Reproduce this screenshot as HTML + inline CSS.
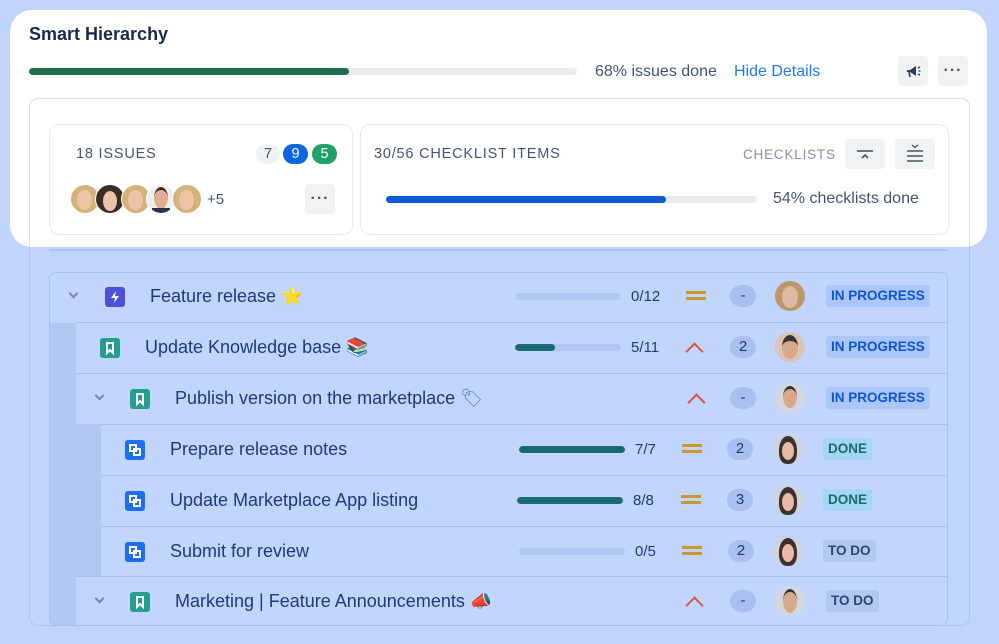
<!DOCTYPE html>
<html><head><meta charset="utf-8"><style>
*{box-sizing:border-box;margin:0;padding:0}
body{width:999px;height:644px;background:#c0d4fd;font-family:"Liberation Sans",sans-serif;position:relative;overflow:hidden}
.a{position:absolute}
.t{color:#1e3a78;font-size:18px;white-space:nowrap}
.row{position:absolute;left:0;right:0;height:51px;border-top:1px solid #a9c0ee;background:#c2d5fd}
.bar{position:absolute;height:7px;border-radius:4px;background:#b0c6f3;overflow:hidden}
.bar i{position:absolute;left:0;top:0;bottom:0;background:#1b6a72;border-radius:4px}
.cnt{position:absolute;font-size:15px;color:#1e3a78}
.pill{position:absolute;width:26px;height:22px;border-radius:11px;background:#a8bff0;color:#1e3a78;font-size:15px;text-align:center;line-height:22px}
.loz{position:absolute;height:22px;padding:0 5px;border-radius:3px;font-weight:bold;font-size:13.5px;line-height:22px}
.ip{background:#acc6f9;color:#0b55cf}
.dn{background:#a4d6f5;color:#1c6b6e}
.td{background:#b3c8f1;color:#2c4373}
.ico{position:absolute;width:20px;height:20px;border-radius:3px}
.av{position:absolute;width:30px;height:30px;border-radius:50%;overflow:hidden}
.chev{position:absolute;width:7px;height:7px;border-right:2px solid #7487b6;border-bottom:2px solid #7487b6;transform:rotate(45deg)}
.eq{position:absolute;width:20px;height:9px;border-top:3px solid #c89a2e;border-bottom:3px solid #c89a2e}
.up{position:absolute;width:13px;height:13px;border-left:2.5px solid #d9534f;border-top:2.5px solid #d9534f;transform:rotate(45deg)}
.btn{position:absolute;background:#f1f2f4;border-radius:4px}
.dots{position:absolute;left:50%;top:50%;transform:translate(-50%,-50%);font-size:16px;color:#44546f;font-weight:bold;letter-spacing:1px;line-height:1}
</style></head><body>

<div class="a" style="left:29px;top:98px;width:941px;height:528px;border:1.5px solid #aec4ef;border-radius:9px"></div>
<div class="a" style="left:49px;top:249px;width:899px;height:2px;background:#aec4ef"></div>

<div class="a" style="left:49px;top:272px;width:899px;height:354px;border:1.5px solid #a9c0ee;border-radius:7px;overflow:hidden;background:#b2c8f3">
  <div class="row" style="top:-1px;border-top:none">
    <div class="chev" style="left:20px;top:18px"></div>
    <div class="ico" style="left:55px;top:15px;background:#4c50d8"><svg width="20" height="20" viewBox="0 0 20 20"><path d="M11 4 6 11h4l-1 5 5-7h-4z" fill="#fff"/></svg></div>
    <div class="t a" style="left:100px;top:14px">Feature release <span style="color:#e0b53a">⭐</span></div>
    <div class="bar" style="left:465px;top:21px;width:106px"></div>
    <div class="cnt" style="left:581px;top:16px">0/12</div>
    <div class="eq" style="left:636px;top:19px"></div>
    <div class="pill" style="left:680px;top:13px">-</div>
    <div class="av" style="left:725px;top:9px;background:#b89a6a"><div class="a" style="left:7px;top:5px;width:16px;height:22px;border-radius:50%;background:#e0b7a0"></div></div>
    <div class="loz ip" style="left:776px;top:13px">IN PROGRESS</div>
  </div>
  <div class="row" style="top:49px;left:26px">
    <div class="ico" style="left:24px;top:15px;background:#269e8e"><svg width="20" height="20"><path d="M7 5h6v10l-3-3-3 3z" fill="none" stroke="#fff" stroke-width="2"/></svg></div>
    <div class="t a" style="left:69px;top:14px">Update Knowledge base 📚</div>
    <div class="bar" style="left:439px;top:21px;width:106px"><i style="width:40px"></i></div>
    <div class="cnt" style="left:555px;top:16px">5/11</div>
    <div class="up" style="left:612px;top:22px"></div>
    <div class="pill" style="left:654px;top:13px">2</div>
    <div class="av" style="left:699px;top:9px;background:#d7c6b8"><div class="a" style="left:7px;top:3px;width:16px;height:24px;border-radius:50%;background:#d9a78a;border-top:6px solid #3a3530"></div></div>
    <div class="loz ip" style="left:750px;top:13px">IN PROGRESS</div>
  </div>
  <div class="row" style="top:100px;left:26px">
    <div class="chev" style="left:20px;top:18px"></div>
    <div class="ico" style="left:54px;top:15px;background:#269e8e"><svg width="20" height="20"><path d="M7 5h6v10l-3-3-3 3z" fill="none" stroke="#fff" stroke-width="2"/></svg></div>
    <div class="t a" style="left:99px;top:14px">Publish version on the marketplace <span style="opacity:.6">🏷</span></div>
    <div class="up" style="left:614px;top:22px"></div>
    <div class="pill" style="left:654px;top:13px">-</div>
    <div class="av" style="left:699px;top:9px;background:#d3d6dc"><div class="a" style="left:8px;top:3px;width:14px;height:22px;border-radius:50%;background:#d7a88e;border-top:3px solid #333"></div></div>
    <div class="loz ip" style="left:750px;top:13px">IN PROGRESS</div>
  </div>
  <div class="row" style="top:151px;left:51px">
    <div class="ico" style="left:24px;top:15px;background:#1d6ff0"><svg width="20" height="20"><rect x="5" y="5" width="6" height="6" fill="none" stroke="#fff" stroke-width="2"/><rect x="9" y="9" width="6" height="6" fill="none" stroke="#fff" stroke-width="2"/></svg></div>
    <div class="t a" style="left:69px;top:14px">Prepare release notes</div>
    <div class="bar" style="left:418px;top:21px;width:106px"><i style="width:106px"></i></div>
    <div class="cnt" style="left:534px;top:16px">7/7</div>
    <div class="eq" style="left:581px;top:19px"></div>
    <div class="pill" style="left:626px;top:13px">2</div>
    <div class="av" style="left:672px;top:9px;background:#cfd3dc"><div class="a" style="left:6px;top:2px;width:18px;height:28px;border-radius:50% 50% 40% 40%;background:#3b302c"></div><div class="a" style="left:9px;top:8px;width:12px;height:18px;border-radius:50%;background:#e8b9a4"></div></div>
    <div class="loz dn" style="left:722px;top:13px">DONE</div>
  </div>
  <div class="row" style="top:202px;left:51px">
    <div class="ico" style="left:24px;top:15px;background:#1d6ff0"><svg width="20" height="20"><rect x="5" y="5" width="6" height="6" fill="none" stroke="#fff" stroke-width="2"/><rect x="9" y="9" width="6" height="6" fill="none" stroke="#fff" stroke-width="2"/></svg></div>
    <div class="t a" style="left:69px;top:14px">Update Marketplace App listing</div>
    <div class="bar" style="left:416px;top:21px;width:106px"><i style="width:106px"></i></div>
    <div class="cnt" style="left:532px;top:16px">8/8</div>
    <div class="eq" style="left:580px;top:19px"></div>
    <div class="pill" style="left:626px;top:13px">3</div>
    <div class="av" style="left:672px;top:9px;background:#cfd3dc"><div class="a" style="left:6px;top:2px;width:18px;height:28px;border-radius:50% 50% 40% 40%;background:#3b302c"></div><div class="a" style="left:9px;top:8px;width:12px;height:18px;border-radius:50%;background:#e8b9a4"></div></div>
    <div class="loz dn" style="left:722px;top:13px">DONE</div>
  </div>
  <div class="row" style="top:253px;left:51px">
    <div class="ico" style="left:24px;top:15px;background:#1d6ff0"><svg width="20" height="20"><rect x="5" y="5" width="6" height="6" fill="none" stroke="#fff" stroke-width="2"/><rect x="9" y="9" width="6" height="6" fill="none" stroke="#fff" stroke-width="2"/></svg></div>
    <div class="t a" style="left:69px;top:14px">Submit for review</div>
    <div class="bar" style="left:418px;top:21px;width:106px"></div>
    <div class="cnt" style="left:534px;top:16px">0/5</div>
    <div class="eq" style="left:581px;top:19px"></div>
    <div class="pill" style="left:627px;top:13px">2</div>
    <div class="av" style="left:672px;top:9px;background:#cfd3dc"><div class="a" style="left:6px;top:2px;width:18px;height:28px;border-radius:50% 50% 40% 40%;background:#3b302c"></div><div class="a" style="left:9px;top:8px;width:12px;height:18px;border-radius:50%;background:#e8b9a4"></div></div>
    <div class="loz td" style="left:722px;top:13px">TO DO</div>
  </div>
  <div class="row" style="top:303px;left:26px">
    <div class="chev" style="left:20px;top:18px"></div>
    <div class="ico" style="left:54px;top:15px;background:#269e8e"><svg width="20" height="20"><path d="M7 5h6v10l-3-3-3 3z" fill="none" stroke="#fff" stroke-width="2"/></svg></div>
    <div class="t a" style="left:99px;top:14px">Marketing | Feature Announcements <span style="color:#8a6d2f">📣</span></div>
    <div class="up" style="left:612px;top:22px"></div>
    <div class="pill" style="left:654px;top:13px">-</div>
    <div class="av" style="left:699px;top:9px;background:#d3d6dc"><div class="a" style="left:8px;top:3px;width:14px;height:24px;border-radius:50%;background:#d7a88e;border-top:3px solid #333"></div></div>
    <div class="loz td" style="left:750px;top:13px">TO DO</div>
  </div>
</div>

<div class="a" style="left:10px;top:10px;width:977px;height:237px;background:#fff;border-radius:22px;overflow:hidden">
  <div class="a" style="left:19px;top:14px;font-size:18px;font-weight:bold;color:#172b4d">Smart Hierarchy</div>
  <div class="a" style="left:19px;top:58px;width:548px;height:7px;border-radius:4px;background:#ebecf0"><div style="width:320px;height:7px;border-radius:4px;background:#216e4e"></div></div>
  <div class="a" style="left:585px;top:53px;font-size:16px;color:#44546f">68% issues done</div>
  <div class="a" style="left:724px;top:53px;font-size:16px;color:#1d7afc">Hide Details</div>
  <div class="btn" style="left:888px;top:46px;width:30px;height:30px"><svg class="a" style="left:6px;top:6px" width="18" height="18" viewBox="0 0 18 18"><path d="M3 8h3l6-4v10L6 10H3z" fill="#2c3e5d"/><path d="M5 10l1 5" stroke="#2c3e5d" stroke-width="1.6"/><path d="M14 6l2-1M14.5 9h2M14 12l2 1" stroke="#2c3e5d" stroke-width="1.3"/></svg></div>
  <div class="btn" style="left:928px;top:46px;width:30px;height:30px"><span class="dots">···</span></div>
  <div class="a" style="left:19px;top:88px;width:941px;height:200px;border:1.5px solid #dcdfe4;border-radius:9px"></div>
  <div class="a" style="left:39px;top:114px;width:304px;height:111px;border:1.5px solid #e8eaee;border-radius:10px">
    <div class="a" style="left:26px;top:21px;font-size:14.5px;letter-spacing:.8px;color:#44546f">18 ISSUES</div>
    <div class="a" style="left:206px;top:19px;width:24px;height:20px;border-radius:10px;background:#f1f2f4;color:#44546f;font-size:14.5px;text-align:center;line-height:20px">7</div>
    <div class="a" style="left:233px;top:19px;width:25px;height:20px;border-radius:10px;background:#0c66e4;color:#fff;font-size:14.5px;text-align:center;line-height:20px">9</div>
    <div class="a" style="left:262px;top:19px;width:25px;height:20px;border-radius:10px;background:#22a06b;color:#fff;font-size:14.5px;text-align:center;line-height:20px">5</div>
    <div class="av" style="left:20px;top:59px;background:#d2b37a;border:1.5px solid #fff"><div class="a" style="left:6px;top:5px;width:15px;height:20px;border-radius:50%;background:#efc4a6"></div></div>
    <div class="av" style="left:45px;top:59px;background:#3d2c24;border:1.5px solid #fff"><div class="a" style="left:7px;top:6px;width:14px;height:20px;border-radius:50%;background:#ecc3ae"></div></div>
    <div class="av" style="left:71px;top:59px;background:#d2b37a;border:1.5px solid #fff"><div class="a" style="left:6px;top:5px;width:15px;height:20px;border-radius:50%;background:#efc4a6"></div></div>
    <div class="av" style="left:96px;top:59px;background:#eceef1;border:1.5px solid #fff"><div class="a" style="left:7px;top:2px;width:14px;height:22px;border-radius:50%;background:#dfae95;border-top:3px solid #3a2a22"></div><div class="a" style="left:5px;top:23px;width:18px;height:6px;background:#2b3448"></div></div>
    <div class="av" style="left:122px;top:59px;background:#d2b37a;border:1.5px solid #fff"><div class="a" style="left:6px;top:5px;width:15px;height:20px;border-radius:50%;background:#efc4a6"></div></div>
    <div class="a" style="left:157px;top:66px;font-size:15px;color:#44546f">+5</div>
    <div class="btn" style="left:255px;top:59px;width:30px;height:30px"><span class="dots">···</span></div>
  </div>
  <div class="a" style="left:350px;top:114px;width:589px;height:111px;border:1.5px solid #e8eaee;border-radius:10px">
    <div class="a" style="left:13px;top:21px;font-size:14.5px;letter-spacing:.8px;color:#44546f">30/56 CHECKLIST ITEMS</div>
    <div class="a" style="left:382px;top:22px;font-size:13.5px;letter-spacing:.8px;color:#8590a2">CHECKLISTS</div>
    <div class="btn" style="left:484px;top:14px;width:40px;height:30px"><svg class="a" style="left:11px;top:8px" width="18" height="14"><path d="M1 4h16" stroke="#44546f" stroke-width="1.6"/><path d="M6 11l3-3 3 3" fill="none" stroke="#44546f" stroke-width="1.6"/></svg></div>
    <div class="btn" style="left:534px;top:14px;width:40px;height:30px"><svg class="a" style="left:11px;top:4px" width="18" height="22"><path d="M6 2l3 2.5 3-2.5" fill="none" stroke="#44546f" stroke-width="1.4"/><path d="M1 8h16M1 13h16M1 18h16" stroke="#44546f" stroke-width="1.6"/></svg></div>
    <div class="a" style="left:25px;top:71px;width:371px;height:7px;border-radius:4px;background:#ebecf0"><div style="width:280px;height:7px;border-radius:4px;background:#0c5bd6"></div></div>
    <div class="a" style="left:412px;top:65px;font-size:16px;color:#44546f">54% checklists done</div>
  </div>
</div>
</body></html>
